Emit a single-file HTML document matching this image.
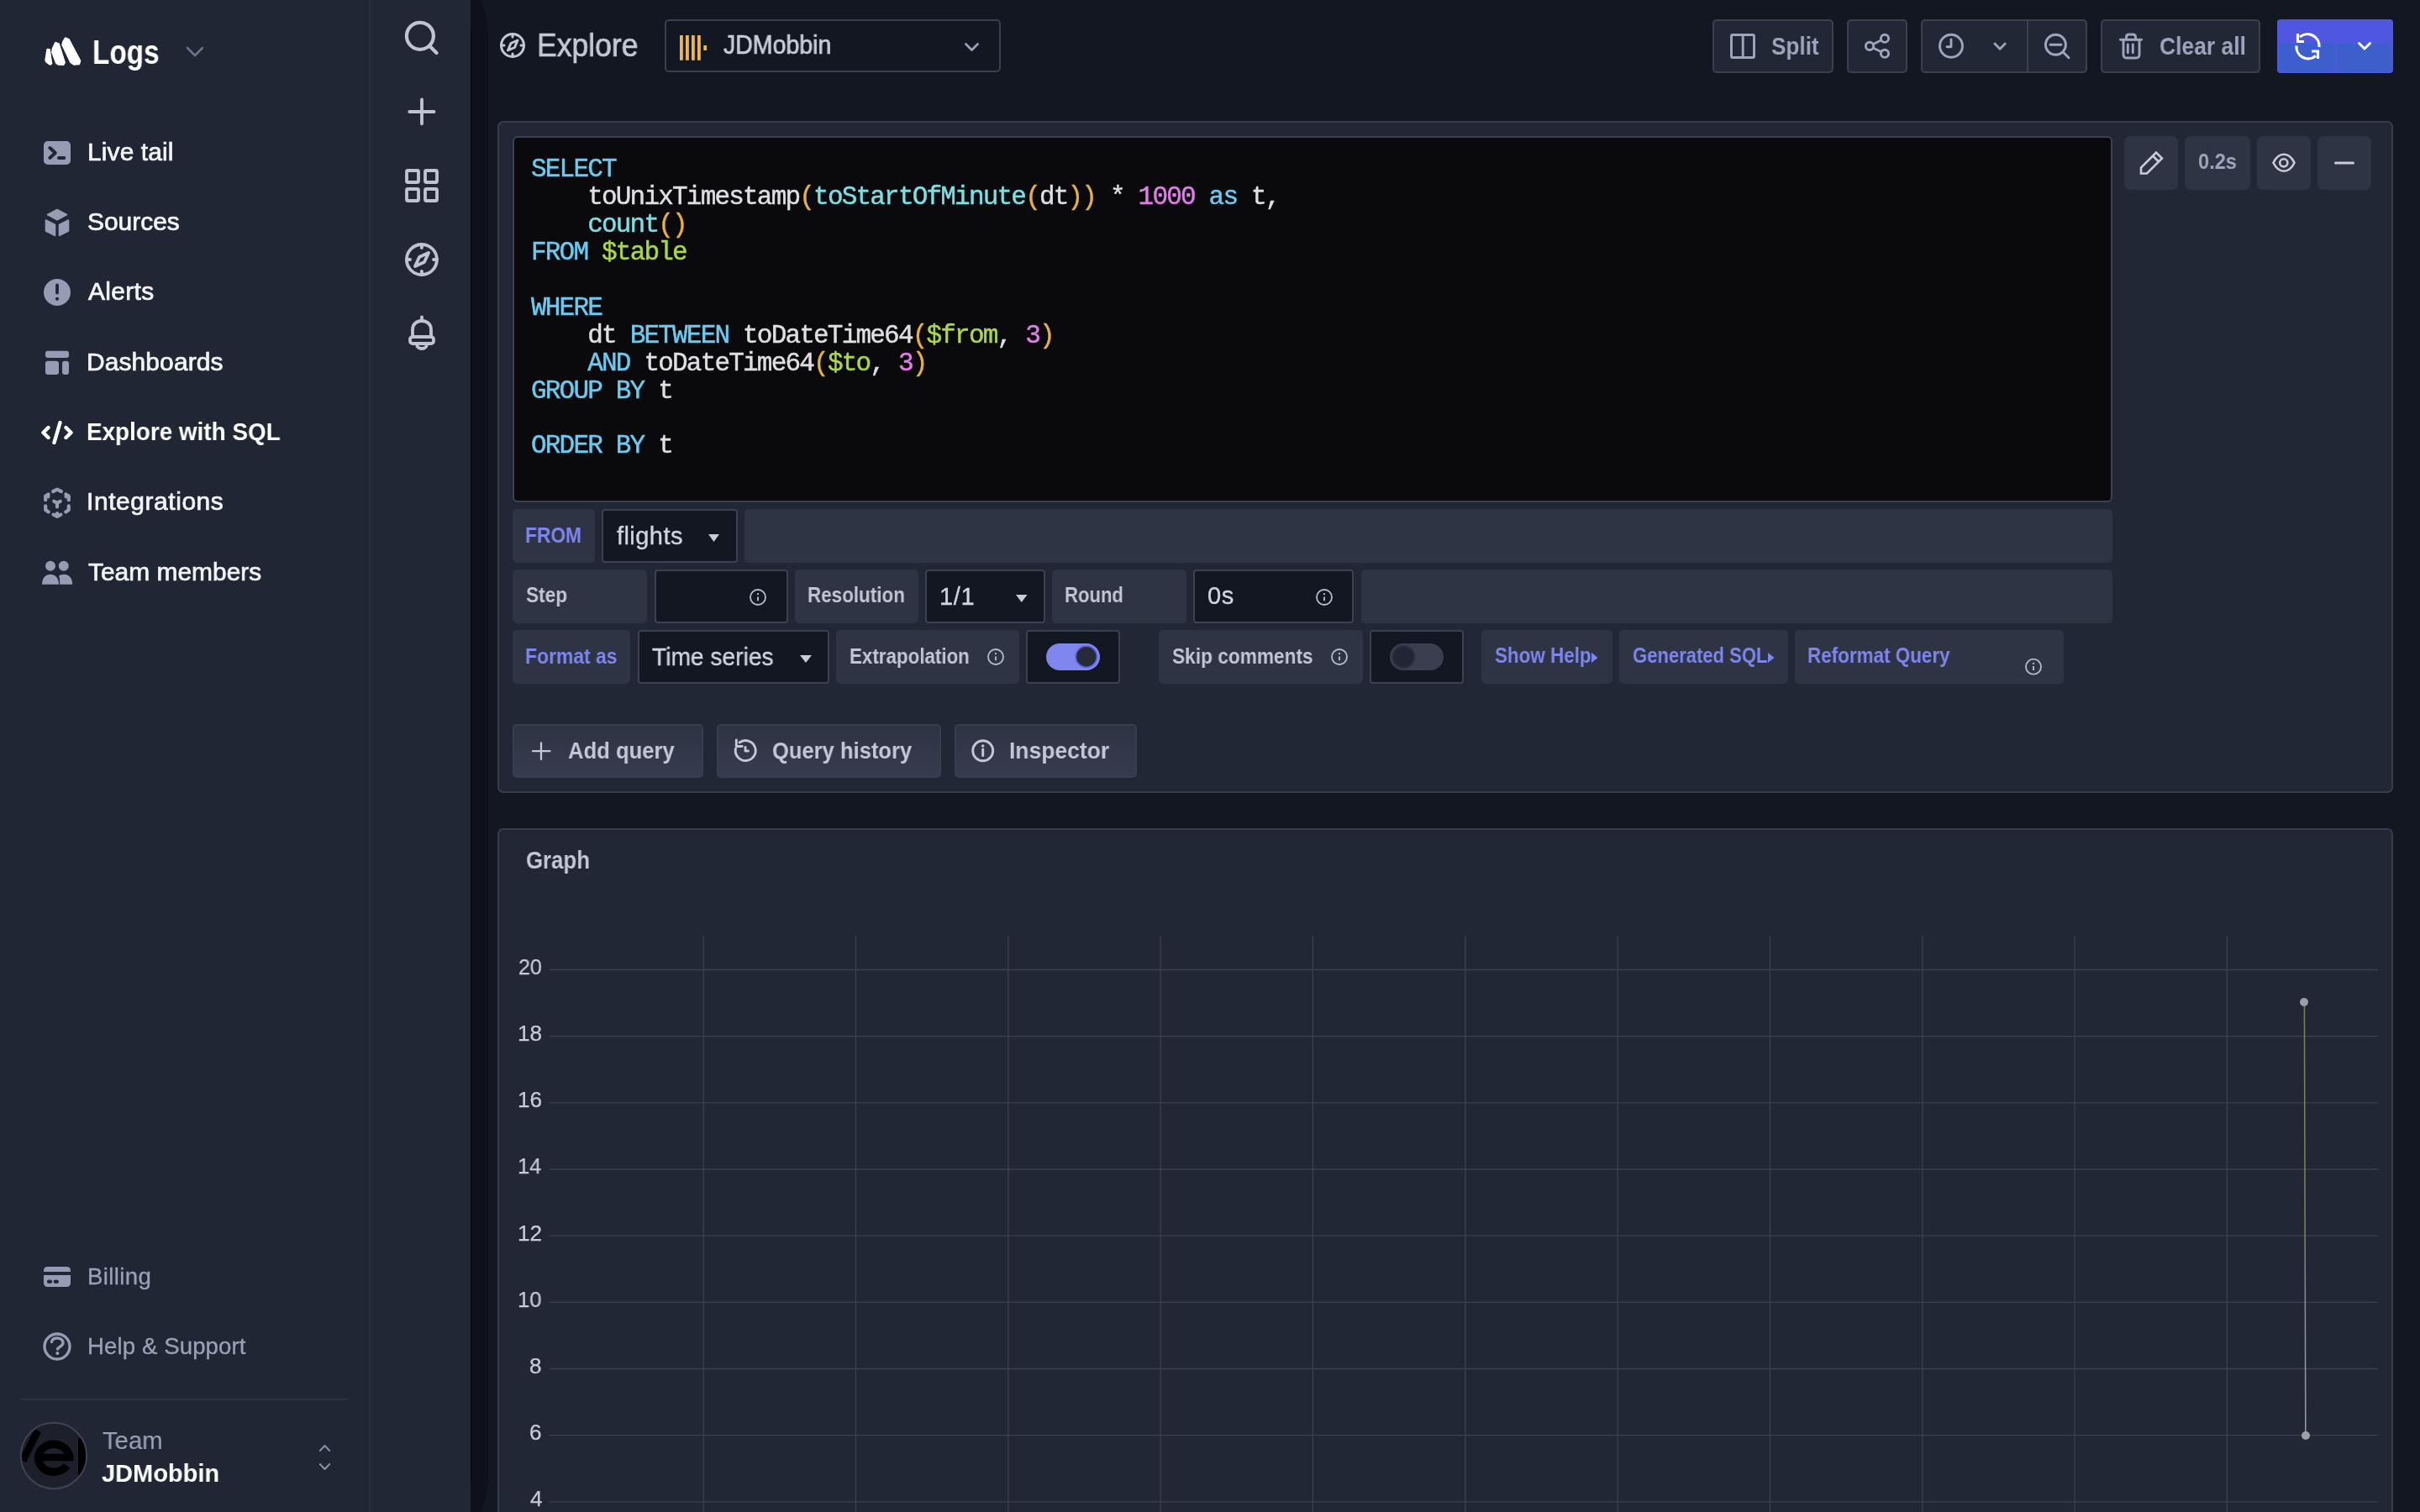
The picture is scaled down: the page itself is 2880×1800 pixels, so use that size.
<!DOCTYPE html>
<html><head><meta charset="utf-8"><title>Explore</title>
<style>
html,body{margin:0;padding:0;width:2880px;height:1800px;overflow:hidden;background:#131722;}
@media (max-width:1600px){html{zoom:0.5;}}
body{position:relative;font-family:"Liberation Sans",sans-serif;}
.r{position:absolute;display:block;}
.t{position:absolute;white-space:nowrap;will-change:transform;}
.m{position:absolute;white-space:pre;will-change:transform;font-family:"Liberation Mono",monospace;}
</style></head><body>
<div class="r" style="left:0px;top:0px;width:439px;height:1800px;background:#212635;border-radius:0px;"></div>
<div class="r" style="left:439px;top:0px;width:2px;height:1800px;background:#2a2f3e;border-radius:0px;"></div>
<div class="r" style="left:441px;top:0px;width:119px;height:1800px;background:#222736;border-radius:0px;"></div>
<svg class="r" style="left:560px;top:0px;" width="21" height="1800" viewBox="560 0 21 1800"><path d="M560,0 L571,0 C576,9 580,22 581,37 L581,1763 C580,1778 576,1791 571,1800 L560,1800 Z" fill="#0e111b"/><rect x="560" y="36" width="1.2" height="1728" fill="#07080c"/></svg>
<svg class="r" style="left:50px;top:40px;" width="50" height="42" viewBox="50 40 50 42"><g fill="#fff" stroke="#fff" stroke-width="2.6" stroke-linejoin="round"><path d="M56.6,59 L58.6,59.2 L61,75.6 L59.6,76.4 L55.4,73.4 L54.6,71.6 Z"/><path d="M66.2,51.2 L69.6,52.4 L76.6,74.4 L75.4,76.6 L69.6,76.4 L67.2,74.8 L62.4,62 L63,58 Z"/><path d="M78,45.6 L81.6,47.2 L95,72.4 L94,76 L88,76.4 L84.4,74 L74.6,53.4 L75.6,49.4 Z"/></g></svg>
<div class="t" style="left:109.75px;top:42.66px;font-size:39.97px;line-height:39.97px;color:#ffffff;font-weight:700;letter-spacing:0.000px;transform:scaleX(0.8339);transform-origin:0 0;">Logs</div>
<svg class="r" style="left:218px;top:52px;" width="28" height="20" viewBox="218 52 28 20"><path d="M223,57 L232,66 L241,57" fill="none" stroke="#6b7386" stroke-width="2.6" stroke-linecap="round" stroke-linejoin="round"/></svg>
<div class="t" style="left:103.73px;top:165.65px;font-size:29.94px;line-height:29.94px;color:#f4f5f8;font-weight:400;letter-spacing:0.124px;-webkit-text-stroke:0.7px #f4f5f8;">Live tail</div>
<div class="t" style="left:103.96px;top:248.95px;font-size:29.94px;line-height:29.94px;color:#f4f5f8;font-weight:400;letter-spacing:0.000px;transform:scaleX(0.9961);transform-origin:0 0;-webkit-text-stroke:0.7px #f4f5f8;">Sources</div>
<div class="t" style="left:105.23px;top:332.35px;font-size:29.94px;line-height:29.94px;color:#f4f5f8;font-weight:400;letter-spacing:0.324px;-webkit-text-stroke:0.7px #f4f5f8;">Alerts</div>
<div class="t" style="left:102.83px;top:415.65px;font-size:29.94px;line-height:29.94px;color:#f4f5f8;font-weight:400;letter-spacing:0.117px;-webkit-text-stroke:0.7px #f4f5f8;">Dashboards</div>
<div class="t" style="left:103.42px;top:499.82px;font-size:28.92px;line-height:28.92px;color:#ffffff;font-weight:700;letter-spacing:0.000px;transform:scaleX(0.9636);transform-origin:0 0;">Explore with SQL</div>
<div class="t" style="left:102.53px;top:582.35px;font-size:29.94px;line-height:29.94px;color:#f4f5f8;font-weight:400;letter-spacing:0.579px;-webkit-text-stroke:0.7px #f4f5f8;">Integrations</div>
<div class="t" style="left:104.63px;top:665.65px;font-size:29.94px;line-height:29.94px;color:#f4f5f8;font-weight:400;letter-spacing:0.000px;transform:scaleX(0.9996);transform-origin:0 0;-webkit-text-stroke:0.7px #f4f5f8;">Team members</div>
<svg class="r" style="left:48px;top:160px;" width="42" height="40" viewBox="48 160 42 40"><rect x="52" y="168" width="32" height="28" rx="5" fill="#959cb3"/><path d="M59.3,176 L65.8,182 L59.3,188" fill="none" stroke="#212635" stroke-width="3.9" stroke-linecap="round" stroke-linejoin="round"/><path d="M70,188 L76.3,188" stroke="#212635" stroke-width="3.9" stroke-linecap="round"/></svg>
<svg class="r" style="left:48px;top:244px;" width="42" height="42" viewBox="48 244 42 42"><g fill="#959cb3" stroke="#959cb3" stroke-width="1.6" stroke-linejoin="round"><path d="M68,249.5 L79.5,255.5 L68,261.8 L56.5,255.5 Z"/><path d="M54.5,262 L65.5,267.5 L65.5,280.5 L54.5,275 Z"/><path d="M70.5,267.5 L81.5,262 L81.5,275 L70.5,280.5 Z"/></g></svg>
<svg class="r" style="left:48px;top:328px;" width="42" height="40" viewBox="48 328 42 40"><circle cx="68" cy="348" r="16" fill="#959cb3"/><path d="M68,339.5 L68,348.5" stroke="#212635" stroke-width="3.8" stroke-linecap="round"/><circle cx="68" cy="355.8" r="2.1" fill="#212635"/></svg>
<svg class="r" style="left:48px;top:412px;" width="42" height="38" viewBox="48 412 42 38"><g fill="#959cb3"><rect x="54" y="417.7" width="28" height="8.3" rx="3"/><rect x="54" y="429.7" width="16" height="16.4" rx="3"/><rect x="74" y="429.7" width="8" height="16.4" rx="3"/></g></svg>
<svg class="r" style="left:46px;top:498px;" width="46" height="34" viewBox="46 498 46 34"><g fill="none" stroke="#fff" stroke-width="4.4" stroke-linecap="round" stroke-linejoin="round"><path d="M57.5,509 L51.5,515 L57.5,521"/><path d="M78.5,509 L84.5,515 L78.5,521"/><path d="M71.5,503 L64.5,527"/></g></svg>
<svg class="r" style="left:46px;top:576px;" width="46" height="46" viewBox="46 576 46 46"><g fill="none" stroke="#959cb3" stroke-width="4.2" stroke-linecap="round" stroke-linejoin="round"><path d="M63.2,585 L68,582.6 L72.8,585"/><path d="M54.2,595.2 L54.2,590.6 L57.6,588.4"/><path d="M81.8,595.2 L81.8,590.6 L78.4,588.4"/><path d="M54.2,602.4 L54.2,607 L57.8,609.4"/><path d="M81.8,602.4 L81.8,607 L78.2,609.4"/><path d="M63.6,612.6 L68,615 L72.4,612.6 M68,611 L68,614"/><path d="M64.3,596.8 L68,598.6 L71.7,596.8 M68,598.6 L68,603.4"/><path d="M57.5,591.2 L57.5,591.3 M78.5,591.2 L78.5,591.3"/></g></svg>
<svg class="r" style="left:46px;top:662px;" width="46" height="38" viewBox="46 662 46 38"><g fill="#959cb3"><circle cx="60" cy="673.8" r="6"/><circle cx="75.8" cy="673.8" r="6"/><path d="M71.2,695.8 L86.2,695.8 C86.2,688 82,683.8 76,683.8 C73.5,683.8 71.5,684.5 70,685.5 C71,687.5 71.2,690 71.2,695.8 Z"/><path d="M50,695.8 L70,695.8 C70,688 65.5,683.8 60,683.8 C54.5,683.8 50,688 50,695.8 Z"/></g></svg>
<div class="t" style="left:103.52px;top:1505.82px;font-size:27.62px;line-height:27.62px;color:#9aa1b6;font-weight:400;letter-spacing:0.356px;-webkit-text-stroke:0.3px #9aa1b6;">Billing</div>
<div class="t" style="left:103.52px;top:1588.62px;font-size:27.62px;line-height:27.62px;color:#9aa1b6;font-weight:400;letter-spacing:0.091px;-webkit-text-stroke:0.3px #9aa1b6;">Help &amp; Support</div>
<svg class="r" style="left:48px;top:1504px;" width="42" height="32" viewBox="48 1504 42 32"><rect x="52" y="1508" width="32" height="24" rx="4.5" fill="#959cb3"/><rect x="50" y="1514" width="36" height="4" fill="#212635"/><ellipse cx="59" cy="1525.8" rx="3.1" ry="2.2" fill="#212635"/><ellipse cx="66.8" cy="1525.8" rx="3.1" ry="2.2" fill="#212635"/></svg>
<svg class="r" style="left:46px;top:1582px;" width="44" height="42" viewBox="46 1582 44 42"><circle cx="68" cy="1603" r="15" fill="none" stroke="#959cb3" stroke-width="3.4"/><path d="M61.5,1597.5 C62,1594.5 64.5,1593 68,1593 C72,1593 75,1595.5 75,1598.8 C75,1602.5 70,1603 68.5,1606" fill="none" stroke="#959cb3" stroke-width="3.4" stroke-linecap="round"/><circle cx="68.3" cy="1611" r="2.1" fill="#959cb3"/></svg>
<div class="r" style="left:24px;top:1665px;width:390px;height:2px;background:#2c3140;border-radius:0px;"></div>
<svg class="r" style="left:20px;top:1689px;" width="88" height="88" viewBox="20 1689 88 88"><defs><clipPath id="av"><circle cx="64" cy="1733" r="39"/></clipPath></defs><circle cx="64" cy="1733" r="39" fill="#1d202b"/><g clip-path="url(#av)"><path d="M27,1739 L45,1703" stroke="#000" stroke-width="9"/><rect x="93" y="1712" width="9" height="44" fill="#000"/><path d="M82.5,1735 A18.5,16.5 0 1 0 79.5,1744.8" fill="none" stroke="#000" stroke-width="9.5"/><path d="M46,1735 L87.5,1735" stroke="#000" stroke-width="8.5"/></g><circle cx="64" cy="1733" r="39.2" fill="none" stroke="#3e4354" stroke-width="2"/></svg>
<div class="t" style="left:121.64px;top:1699.61px;font-size:30.23px;line-height:30.23px;color:#9aa1b6;font-weight:400;letter-spacing:0.000px;transform:scaleX(0.9681);transform-origin:0 0;-webkit-text-stroke:0.15px #9aa1b6;">Team</div>
<div class="t" style="left:120.56px;top:1738.78px;font-size:29.80px;line-height:29.80px;color:#ffffff;font-weight:700;letter-spacing:0.000px;transform:scaleX(0.9735);transform-origin:0 0;">JDMobbin</div>
<svg class="r" style="left:374px;top:1714px;" width="26" height="42" viewBox="374 1714 26 42"><g fill="none" stroke="#8a91a6" stroke-width="2" stroke-linecap="round" stroke-linejoin="round"><path d="M380.8,1727 L386.5,1721 L392.2,1727"/><path d="M380.8,1743 L386.5,1749 L392.2,1743"/></g></svg>
<svg class="r" style="left:476px;top:20px;" width="52" height="50" viewBox="476 20 52 50"><g fill="none" stroke="#c0c4d2" stroke-width="4.2" stroke-linecap="round"><circle cx="499.9" cy="42.8" r="16"/><path d="M512,55.5 L519.5,63"/></g></svg>
<svg class="r" style="left:480px;top:112px;" width="44" height="42" viewBox="480 112 44 42"><g fill="none" stroke="#c0c4d2" stroke-width="3.8" stroke-linecap="round"><path d="M502,118.5 L502,147.3 M487.3,133 L516.5,133"/></g></svg>
<svg class="r" style="left:478px;top:196px;" width="48" height="50" viewBox="478 196 48 50"><g fill="none" stroke="#c0c4d2" stroke-width="3.8"><rect x="484" y="203" width="14" height="14" rx="1.5"/><rect x="506" y="203" width="14" height="14" rx="1.5"/><rect x="484" y="225" width="14" height="14" rx="1.5"/><rect x="506" y="225" width="14" height="14" rx="1.5"/></g></svg>
<svg class="r" style="left:476px;top:284px;" width="52" height="50" viewBox="476 284 52 50"><g fill="none" stroke="#c0c4d2" stroke-width="3.8" stroke-linecap="round" stroke-linejoin="round"><circle cx="501.9" cy="309" r="18"/><path d="M501.9,291 L501.9,295 M501.9,323 L501.9,327 M484,309 L488,309 M516,309 L520,309"/><path d="M510,301 L505,312 L494,317 L499,306 Z"/></g></svg>
<svg class="r" style="left:480px;top:372px;" width="44" height="50" viewBox="480 372 44 50"><g fill="none" stroke="#c0c4d2" stroke-width="3.8" stroke-linecap="round" stroke-linejoin="round"><path d="M502,377.5 L502,382"/><path d="M491,401 L491,392 C491,386 496,382 502,382 C508,382 513,386 513,392 L513,401"/><rect x="488" y="401" width="28" height="8" rx="3"/><path d="M496,409.5 C496,413 498.5,415 502,415 C505.5,415 508,413 508,409.5"/></g></svg>
<svg class="r" style="left:590px;top:34px;" width="40" height="40" viewBox="590 34 40 40"><g fill="none" stroke="#c3c7d4" stroke-width="3" stroke-linecap="round" stroke-linejoin="round"><circle cx="610" cy="54" r="13.5"/><path d="M610,40.5 L610,44 M610,64 L610,67.5 M596.5,54 L600,54 M620,54 L623.5,54"/><path d="M616,48 L612.5,56.5 L604.5,60 L608,51.5 Z"/></g></svg>
<div class="t" style="left:639.07px;top:34.18px;font-size:39.24px;line-height:39.24px;color:#c5c9d6;font-weight:400;letter-spacing:0.000px;transform:scaleX(0.9053);transform-origin:0 0;-webkit-text-stroke:0.7px #c5c9d6;">Explore</div>
<div class="r" style="left:791px;top:23px;width:400px;height:63px;background:#131722;border-radius:5px;border:2px solid #3a3f4e;;box-sizing:border-box"></div>
<svg class="r" style="left:805px;top:38px;" width="40" height="38" viewBox="805 38 40 38"><g fill="#eeb64e"><rect x="809" y="42" width="3.8" height="29.8"/><rect x="816" y="42" width="3.8" height="29.8"/><rect x="823" y="42" width="3.8" height="29.8"/><rect x="830" y="42" width="3.8" height="29.8"/><rect x="837.3" y="54" width="3.8" height="6"/></g></svg>
<div class="t" style="left:860.57px;top:38.16px;font-size:30.52px;line-height:30.52px;color:#c8ccd8;font-weight:400;letter-spacing:0.000px;transform:scaleX(0.9334);transform-origin:0 0;-webkit-text-stroke:0.7px #c8ccd8;">JDMobbin</div>
<svg class="r" style="left:1144px;top:46px;" width="26" height="20" viewBox="1144 46 26 20"><path d="M1149.5,52.5 L1156.5,59.5 L1163.5,52.5" fill="none" stroke="#9aa1b4" stroke-width="2.8" stroke-linecap="round" stroke-linejoin="round"/></svg>
<div class="r" style="left:2038px;top:23px;width:144px;height:64px;background:#222736;border-radius:5px;border:2px solid #3b4050;;box-sizing:border-box"></div>
<div class="r" style="left:2198px;top:23px;width:72px;height:64px;background:#222736;border-radius:5px;border:2px solid #3b4050;;box-sizing:border-box"></div>
<div class="r" style="left:2286px;top:23px;width:198px;height:64px;background:#222736;border-radius:5px;border:2px solid #3b4050;;box-sizing:border-box"></div>
<div class="r" style="left:2500px;top:23px;width:190px;height:64px;background:#222736;border-radius:5px;border:2px solid #3b4050;;box-sizing:border-box"></div>
<div class="r" style="left:2412px;top:25px;width:2px;height:60px;background:#3b4050;border-radius:0px;"></div>
<svg class="r" style="left:2055px;top:36px;" width="38" height="38" viewBox="2055 36 38 38"><g fill="none" stroke="#9ea5bc" stroke-width="2.9"><rect x="2060.5" y="41.5" width="27" height="27" rx="1.5"/><path d="M2074.2,41.5 L2074.2,68.5"/></g></svg>
<div class="t" style="left:2107.72px;top:39.55px;font-size:29.36px;line-height:29.36px;color:#9ea5bc;font-weight:700;letter-spacing:0.000px;transform:scaleX(0.8906);transform-origin:0 0;">Split</div>
<svg class="r" style="left:2215px;top:36px;" width="40" height="38" viewBox="2215 36 40 38"><g fill="none" stroke="#9ea5bc" stroke-width="2.9"><circle cx="2243" cy="45.8" r="4.6"/><circle cx="2225" cy="54.9" r="4.6"/><circle cx="2243" cy="63.8" r="4.6"/><path d="M2229,52.8 L2239,47.8 M2229,57 L2239,61.8"/></g></svg>
<svg class="r" style="left:2302px;top:36px;" width="40" height="38" viewBox="2302 36 40 38"><g fill="none" stroke="#9ea5bc" stroke-width="2.9" stroke-linecap="round" stroke-linejoin="round"><circle cx="2322" cy="54.8" r="13.5"/><path d="M2322,47 L2322,55.7 L2317,55.7"/></g></svg>
<svg class="r" style="left:2368px;top:46px;" width="24" height="18" viewBox="2368 46 24 18"><path d="M2374,52 L2380.1,58.2 L2386.2,52" fill="none" stroke="#9ea5bc" stroke-width="2.8" stroke-linecap="round" stroke-linejoin="round"/></svg>
<svg class="r" style="left:2428px;top:36px;" width="40" height="38" viewBox="2428 36 40 38"><g fill="none" stroke="#9ea5bc" stroke-width="2.9" stroke-linecap="round"><circle cx="2446.4" cy="53.2" r="12"/><path d="M2440,53.2 L2453,53.2 M2455.5,62.3 L2462,68.8"/></g></svg>
<svg class="r" style="left:2518px;top:36px;" width="36" height="38" viewBox="2518 36 36 38"><g fill="none" stroke="#9ea5bc" stroke-width="2.9" stroke-linecap="round" stroke-linejoin="round"><path d="M2523.5,47.3 L2548.5,47.3"/><path d="M2530.5,47 L2530.5,44 C2530.5,42 2532,41 2534,41 L2538,41 C2540,41 2541.5,42 2541.5,44 L2541.5,47"/><path d="M2527,47.5 L2527,65 C2527,67.5 2528.5,69 2531,69 L2542,69 C2544.5,69 2546,67.5 2546,65 L2546,47.5"/><path d="M2532.3,53 L2532.3,62.8 M2538.3,53 L2538.3,62.8"/></g></svg>
<div class="t" style="left:2569.94px;top:39.55px;font-size:29.36px;line-height:29.36px;color:#9ea5bc;font-weight:700;letter-spacing:0.000px;transform:scaleX(0.9010);transform-origin:0 0;">Clear all</div>
<div class="r" style="left:2710px;top:23px;width:138px;height:64px;background:#4f57e0;border-radius:4px;"></div>
<div class="r" style="left:2712px;top:52px;width:67px;height:33px;background:#3d5fcb;border-radius:0px;"></div>
<div class="r" style="left:2782px;top:52px;width:64px;height:33px;background:#3d5fcb;border-radius:0px;"></div>
<div class="r" style="left:2779px;top:25px;width:3px;height:60px;background:#4f57e0;border-radius:0px;"></div>
<svg class="r" style="left:2725px;top:34px;" width="42" height="42" viewBox="2725 34 42 42"><g fill="none" stroke="#fff" stroke-width="3.2" stroke-linecap="butt" stroke-linejoin="miter"><path d="M2760,56 A14,14 0 0 0 2737,44"/><path d="M2733,54.5 A14,14 0 0 0 2756,66.5"/><path d="M2734.5,40 L2734.5,49.5 L2742,49.5"/><path d="M2758.5,70 L2758.5,61 L2751,61"/></g></svg>
<svg class="r" style="left:2802px;top:44px;" width="24" height="22" viewBox="2802 44 24 22"><path d="M2807.5,51.5 L2814,58 L2820.5,51.5" fill="none" stroke="#fff" stroke-width="3" stroke-linecap="round" stroke-linejoin="round"/></svg>
<div class="r" style="left:592px;top:144px;width:2256px;height:800px;background:#222736;border-radius:7px;border:2px solid #373c4e;;box-sizing:border-box"></div>
<div class="r" style="left:610px;top:162px;width:1904px;height:436px;background:#0a0a0d;border-radius:6px;border:2px solid #3b4052;;box-sizing:border-box"></div>
<div class="m" style="left:632px;top:185.84px;font-size:31.0px;line-height:31.0px;letter-spacing:-1.80px;-webkit-text-stroke:0.45px currentColor"><span style="color:#6dc9f0">SELECT</span></div>
<div class="m" style="left:632px;top:218.80px;font-size:31.0px;line-height:31.0px;letter-spacing:-1.80px;-webkit-text-stroke:0.45px currentColor"><span style="color:#dedee4">&nbsp;&nbsp;&nbsp;&nbsp;toUnixTimestamp</span><span style="color:#e6b044">(</span><span style="color:#7ddfe2">toStartOfMinute</span><span style="color:#e6b044">(</span><span style="color:#dedee4">dt</span><span style="color:#e6b044">))</span><span style="color:#dedee4">&nbsp;*&nbsp;</span><span style="color:#e07ee6">1000</span><span style="color:#dedee4">&nbsp;</span><span style="color:#6dc9f0">as</span><span style="color:#dedee4">&nbsp;t,</span></div>
<div class="m" style="left:632px;top:251.76px;font-size:31.0px;line-height:31.0px;letter-spacing:-1.80px;-webkit-text-stroke:0.45px currentColor"><span style="color:#7ddfe2">&nbsp;&nbsp;&nbsp;&nbsp;count</span><span style="color:#e6b044">()</span></div>
<div class="m" style="left:632px;top:284.72px;font-size:31.0px;line-height:31.0px;letter-spacing:-1.80px;-webkit-text-stroke:0.45px currentColor"><span style="color:#6dc9f0">FROM</span><span style="color:#dedee4">&nbsp;</span><span style="color:#aad74b">$table</span></div>
<div class="m" style="left:632px;top:350.64px;font-size:31.0px;line-height:31.0px;letter-spacing:-1.80px;-webkit-text-stroke:0.45px currentColor"><span style="color:#6dc9f0">WHERE</span></div>
<div class="m" style="left:632px;top:383.60px;font-size:31.0px;line-height:31.0px;letter-spacing:-1.80px;-webkit-text-stroke:0.45px currentColor"><span style="color:#dedee4">&nbsp;&nbsp;&nbsp;&nbsp;dt&nbsp;</span><span style="color:#6dc9f0">BETWEEN</span><span style="color:#dedee4">&nbsp;toDateTime64</span><span style="color:#e6b044">(</span><span style="color:#aad74b">$from</span><span style="color:#dedee4">,&nbsp;</span><span style="color:#e07ee6">3</span><span style="color:#e6b044">)</span></div>
<div class="m" style="left:632px;top:416.56px;font-size:31.0px;line-height:31.0px;letter-spacing:-1.80px;-webkit-text-stroke:0.45px currentColor"><span style="color:#6dc9f0">&nbsp;&nbsp;&nbsp;&nbsp;AND</span><span style="color:#dedee4">&nbsp;toDateTime64</span><span style="color:#e6b044">(</span><span style="color:#aad74b">$to</span><span style="color:#dedee4">,&nbsp;</span><span style="color:#e07ee6">3</span><span style="color:#e6b044">)</span></div>
<div class="m" style="left:632px;top:449.52px;font-size:31.0px;line-height:31.0px;letter-spacing:-1.80px;-webkit-text-stroke:0.45px currentColor"><span style="color:#6dc9f0">GROUP&nbsp;BY</span><span style="color:#dedee4">&nbsp;t</span></div>
<div class="m" style="left:632px;top:515.44px;font-size:31.0px;line-height:31.0px;letter-spacing:-1.80px;-webkit-text-stroke:0.45px currentColor"><span style="color:#6dc9f0">ORDER&nbsp;BY</span><span style="color:#dedee4">&nbsp;t</span></div>
<div class="r" style="left:610px;top:606px;width:98px;height:64px;background:#2f3445;border-radius:5px;"></div>
<div class="t" style="left:625.46px;top:624.59px;font-size:25.29px;line-height:25.29px;color:#7d85ef;font-weight:700;letter-spacing:0.000px;transform:scaleX(0.9006);transform-origin:0 0;">FROM</div>
<div class="r" style="left:716px;top:606px;width:162px;height:64px;background:#131722;border-radius:4px;border:2px solid #3b4052;;box-sizing:border-box"></div>
<div class="t" style="left:733.56px;top:624.09px;font-size:29.07px;line-height:29.07px;color:#d0d4e0;font-weight:400;letter-spacing:0.418px;-webkit-text-stroke:0.35px #d0d4e0;">flights</div>
<svg class="r" style="left:841px;top:634px;" width="17" height="13" viewBox="841 634 17 13"><path d="M843,636 L856,636 L849.5,645 Z" fill="#c8ccd8"/></svg>
<div class="r" style="left:886px;top:606px;width:1628px;height:64px;background:#2f3445;border-radius:5px;"></div>
<div class="r" style="left:610px;top:678px;width:160px;height:64px;background:#2f3445;border-radius:5px;"></div>
<div class="t" style="left:626.32px;top:696.19px;font-size:25.29px;line-height:25.29px;color:#c2c6d3;font-weight:700;letter-spacing:0.000px;transform:scaleX(0.8965);transform-origin:0 0;">Step</div>
<div class="r" style="left:779px;top:678px;width:159px;height:64px;background:#131722;border-radius:4px;border:2px solid #3b4052;;box-sizing:border-box"></div>
<svg class="r" style="left:890px;top:699px;" width="25" height="25" viewBox="890 699 25 25"><circle cx="902" cy="711" r="9.0" fill="none" stroke="#b6bbce" stroke-width="1.8"/><circle cx="902" cy="707.2" r="1.15" fill="#b6bbce"/><path d="M902,710.4 L902,715.2" stroke="#b6bbce" stroke-width="1.9" stroke-linecap="butt"/></svg>
<div class="r" style="left:946px;top:678px;width:147px;height:64px;background:#2f3445;border-radius:5px;"></div>
<div class="t" style="left:961.19px;top:696.39px;font-size:25.29px;line-height:25.29px;color:#c2c6d3;font-weight:700;letter-spacing:0.000px;transform:scaleX(0.8870);transform-origin:0 0;">Resolution</div>
<div class="r" style="left:1101px;top:678px;width:143px;height:64px;background:#131722;border-radius:4px;border:2px solid #3b4052;;box-sizing:border-box"></div>
<div class="t" style="left:1118.32px;top:695.99px;font-size:29.07px;line-height:29.07px;color:#d0d4e0;font-weight:400;letter-spacing:0.577px;-webkit-text-stroke:0.35px #d0d4e0;">1/1</div>
<svg class="r" style="left:1206.5px;top:706px;" width="17.5" height="13" viewBox="1206.5 706 17.5 13"><path d="M1208.5,708 L1222,708 L1215.25,717 Z" fill="#c8ccd8"/></svg>
<div class="r" style="left:1252px;top:678px;width:160px;height:64px;background:#2f3445;border-radius:5px;"></div>
<div class="t" style="left:1266.51px;top:696.39px;font-size:25.29px;line-height:25.29px;color:#c2c6d3;font-weight:700;letter-spacing:0.000px;transform:scaleX(0.8736);transform-origin:0 0;">Round</div>
<div class="r" style="left:1420px;top:678px;width:191px;height:64px;background:#131722;border-radius:4px;border:2px solid #3b4052;;box-sizing:border-box"></div>
<div class="t" style="left:1436.84px;top:694.69px;font-size:29.07px;line-height:29.07px;color:#d0d4e0;font-weight:400;letter-spacing:0.512px;-webkit-text-stroke:0.35px #d0d4e0;">0s</div>
<svg class="r" style="left:1564px;top:699px;" width="25" height="25" viewBox="1564 699 25 25"><circle cx="1576" cy="711" r="9.0" fill="none" stroke="#b6bbce" stroke-width="1.8"/><circle cx="1576" cy="707.2" r="1.15" fill="#b6bbce"/><path d="M1576,710.4 L1576,715.2" stroke="#b6bbce" stroke-width="1.9" stroke-linecap="butt"/></svg>
<div class="r" style="left:1620px;top:678px;width:894px;height:64px;background:#2f3445;border-radius:5px;"></div>
<div class="r" style="left:610px;top:750px;width:140px;height:64px;background:#2f3445;border-radius:5px;"></div>
<div class="t" style="left:625.45px;top:768.99px;font-size:25.29px;line-height:25.29px;color:#7d85ef;font-weight:700;letter-spacing:0.000px;transform:scaleX(0.9060);transform-origin:0 0;">Format as</div>
<div class="r" style="left:759px;top:750px;width:228px;height:64px;background:#131722;border-radius:4px;border:2px solid #3b4052;;box-sizing:border-box"></div>
<div class="t" style="left:776.37px;top:767.89px;font-size:29.07px;line-height:29.07px;color:#d0d4e0;font-weight:400;letter-spacing:0.000px;transform:scaleX(0.9698);transform-origin:0 0;-webkit-text-stroke:0.35px #d0d4e0;">Time series</div>
<svg class="r" style="left:950px;top:778px;" width="18" height="13" viewBox="950 778 18 13"><path d="M952,780 L966,780 L959.0,789 Z" fill="#c8ccd8"/></svg>
<div class="r" style="left:995px;top:750px;width:218px;height:64px;background:#2f3445;border-radius:5px;"></div>
<div class="t" style="left:1010.99px;top:768.99px;font-size:25.29px;line-height:25.29px;color:#c2c6d3;font-weight:700;letter-spacing:0.000px;transform:scaleX(0.8839);transform-origin:0 0;">Extrapolation</div>
<svg class="r" style="left:1173px;top:770px;" width="25" height="25" viewBox="1173 770 25 25"><circle cx="1185" cy="782" r="9.0" fill="none" stroke="#b6bbce" stroke-width="1.8"/><circle cx="1185" cy="778.2" r="1.15" fill="#b6bbce"/><path d="M1185,781.4 L1185,786.2" stroke="#b6bbce" stroke-width="1.9" stroke-linecap="butt"/></svg>
<div class="r" style="left:1221px;top:750px;width:112px;height:64px;background:#131722;border-radius:4px;border:2px solid #3b4052;;box-sizing:border-box"></div>
<div class="r" style="left:1245px;top:766px;width:64px;height:32px;background:#7f86ee;border-radius:16px;"></div>
<svg class="r" style="left:1276px;top:764px;" width="36" height="36" viewBox="1276 764 36 36"><circle cx="1292.8" cy="781.8" r="12.6" fill="#262b38" stroke="#5a63e0" stroke-width="1.8"/></svg>
<div class="r" style="left:1379px;top:750px;width:243px;height:64px;background:#2f3445;border-radius:5px;"></div>
<div class="t" style="left:1395.12px;top:768.59px;font-size:25.29px;line-height:25.29px;color:#c2c6d3;font-weight:700;letter-spacing:0.000px;transform:scaleX(0.8967);transform-origin:0 0;">Skip comments</div>
<svg class="r" style="left:1582px;top:770px;" width="25" height="25" viewBox="1582 770 25 25"><circle cx="1594" cy="782" r="9.0" fill="none" stroke="#b6bbce" stroke-width="1.8"/><circle cx="1594" cy="778.2" r="1.15" fill="#b6bbce"/><path d="M1594,781.4 L1594,786.2" stroke="#b6bbce" stroke-width="1.9" stroke-linecap="butt"/></svg>
<div class="r" style="left:1630px;top:750px;width:112px;height:64px;background:#131722;border-radius:4px;border:2px solid #3b4052;;box-sizing:border-box"></div>
<div class="r" style="left:1654px;top:766px;width:64px;height:32px;background:#3a3f50;border-radius:16px;"></div>
<svg class="r" style="left:1652px;top:764px;" width="36" height="36" viewBox="1652 764 36 36"><circle cx="1670.3" cy="782" r="13" fill="#222633" stroke="#2c3142" stroke-width="2"/></svg>
<div class="r" style="left:1763px;top:750px;width:156px;height:64px;background:#2f3445;border-radius:5px;"></div>
<div class="t" style="left:1779.03px;top:768.19px;font-size:25.29px;line-height:25.29px;color:#7d85ef;font-weight:700;letter-spacing:0.000px;transform:scaleX(0.8865);transform-origin:0 0;">Show Help</div>
<svg class="r" style="left:1892px;top:775px;" width="11.5" height="16" viewBox="1892 775 11.5 16"><path d="M1894,777 L1901.5,783.0 L1894,789 Z" fill="#7d85ef"/></svg>
<div class="r" style="left:1927px;top:750px;width:201px;height:64px;background:#2f3445;border-radius:5px;"></div>
<div class="t" style="left:1942.52px;top:768.19px;font-size:25.29px;line-height:25.29px;color:#7d85ef;font-weight:700;letter-spacing:0.000px;transform:scaleX(0.8720);transform-origin:0 0;">Generated SQL</div>
<svg class="r" style="left:2101.5px;top:775px;" width="11.5" height="16" viewBox="2101.5 775 11.5 16"><path d="M2103.5,777 L2111,783.0 L2103.5,789 Z" fill="#7d85ef"/></svg>
<div class="r" style="left:2136px;top:750px;width:320px;height:64px;background:#2f3445;border-radius:5px;"></div>
<div class="t" style="left:2151.48px;top:768.19px;font-size:25.29px;line-height:25.29px;color:#7d85ef;font-weight:700;letter-spacing:0.000px;transform:scaleX(0.8875);transform-origin:0 0;">Reformat Query</div>
<svg class="r" style="left:2408px;top:781px;" width="25" height="25" viewBox="2408 781 25 25"><circle cx="2420" cy="793.7" r="9.0" fill="none" stroke="#b6bbce" stroke-width="1.8"/><circle cx="2420" cy="789.9000000000001" r="1.15" fill="#b6bbce"/><path d="M2420,793.1 L2420,797.9000000000001" stroke="#b6bbce" stroke-width="1.9" stroke-linecap="butt"/></svg>
<div class="r" style="left:2528px;top:162px;width:64px;height:64px;background:#2f3445;border-radius:7px;"></div>
<div class="r" style="left:2600px;top:162px;width:78px;height:64px;background:#2f3445;border-radius:7px;"></div>
<div class="r" style="left:2686px;top:162px;width:64px;height:64px;background:#2f3445;border-radius:7px;"></div>
<div class="r" style="left:2758px;top:162px;width:64px;height:64px;background:#2f3445;border-radius:7px;"></div>
<svg class="r" style="left:2542px;top:176px;" width="38" height="36" viewBox="2542 176 38 36"><g fill="none" stroke="#c8ccd8" stroke-width="2.6" stroke-linejoin="miter"><path d="M2548,206.5 L2548,199.5 L2566,181.5 L2573,188.5 L2555,206.5 Z"/><path d="M2562,185.5 L2569,192.5"/></g></svg>
<div class="t" style="left:2615.96px;top:180.37px;font-size:25.44px;line-height:25.44px;color:#9ea5bc;font-weight:700;letter-spacing:0.000px;transform:scaleX(0.9275);transform-origin:0 0;">0.2s</div>
<svg class="r" style="left:2700px;top:180px;" width="36" height="28" viewBox="2700 180 36 28"><g fill="none" stroke="#c8ccd8" stroke-width="2.6"><path d="M2705.5,193.8 C2709,186.5 2713,183.8 2718,183.8 C2723,183.8 2727,186.5 2730.5,193.8 C2727,201 2723,203.8 2718,203.8 C2713,203.8 2709,201 2705.5,193.8 Z"/><circle cx="2717.8" cy="193.8" r="4.6"/></g></svg>
<svg class="r" style="left:2774px;top:188px;" width="32" height="12" viewBox="2774 188 32 12"><path d="M2779.5,194 L2800.5,194" stroke="#c8ccd8" stroke-width="3" stroke-linecap="round"/></svg>
<div class="r" style="left:610px;top:862px;width:227px;height:64px;background:linear-gradient(#2e3343,#363b4f);border-radius:5px;border:2px solid #383d4f;;box-sizing:border-box"></div>
<div class="r" style="left:853px;top:862px;width:267px;height:64px;background:linear-gradient(#2e3343,#363b4f);border-radius:5px;border:2px solid #383d4f;;box-sizing:border-box"></div>
<div class="r" style="left:1136px;top:862px;width:217px;height:64px;background:linear-gradient(#2e3343,#363b4f);border-radius:5px;border:2px solid #383d4f;;box-sizing:border-box"></div>
<svg class="r" style="left:628px;top:878px;" width="32" height="32" viewBox="628 878 32 32"><path d="M644,884.5 L644,904 M634,894.2 L654.5,894.2" stroke="#c4c8d6" stroke-width="2.3" stroke-linecap="round"/></svg>
<div class="t" style="left:675.86px;top:878.71px;font-size:28.34px;line-height:28.34px;color:#c4c8d6;font-weight:700;letter-spacing:0.000px;transform:scaleX(0.9045);transform-origin:0 0;">Add query</div>
<svg class="r" style="left:870px;top:876px;" width="34" height="36" viewBox="870 876 34 36"><g fill="none" stroke="#c4c8d6" stroke-width="2.9" stroke-linecap="round" stroke-linejoin="round"><path d="M875.5,891 A12,12 0 1 0 880,884"/><path d="M876.3,881 L876.3,888.5 L883.2,888.5"/><path d="M887,889.5 L887,894 L890.5,894"/></g></svg>
<div class="t" style="left:919.38px;top:878.71px;font-size:28.34px;line-height:28.34px;color:#c4c8d6;font-weight:700;letter-spacing:0.000px;transform:scaleX(0.9019);transform-origin:0 0;">Query history</div>
<svg class="r" style="left:1152px;top:878px;" width="36" height="32" viewBox="1152 878 36 32"><circle cx="1169.7" cy="893.8" r="12" fill="none" stroke="#c4c8d6" stroke-width="2.9"/><circle cx="1169.7" cy="888" r="1.8" fill="#c4c8d6"/><path d="M1169.7,892 L1169.7,899.5" stroke="#c4c8d6" stroke-width="3" stroke-linecap="round"/></svg>
<div class="t" style="left:1201.01px;top:878.71px;font-size:28.34px;line-height:28.34px;color:#c4c8d6;font-weight:700;letter-spacing:0.000px;transform:scaleX(0.9339);transform-origin:0 0;">Inspector</div>
<div class="r" style="left:592px;top:986px;width:2256px;height:854px;background:#222736;border-radius:7px;border:2px solid #373c4e;;box-sizing:border-box"></div>
<div class="t" style="left:625.57px;top:1009.94px;font-size:28.78px;line-height:28.78px;color:#c4c8d6;font-weight:700;letter-spacing:0.000px;transform:scaleX(0.8965);transform-origin:0 0;">Graph</div>
<svg class="r" style="left:593px;top:1100px;" width="2255" height="700" viewBox="593 1100 2255 700"><defs><linearGradient id="lg" x1="0" y1="0" x2="0" y2="1"><stop offset="0" stop-color="#76834f"/><stop offset="0.55" stop-color="#7c8858"/><stop offset="0.75" stop-color="#8e949a"/><stop offset="1" stop-color="#9aa0a8"/></linearGradient></defs><g stroke="#3b4050" stroke-width="1.3" fill="none"><path d="M654,1154.50 L2830,1154.50"/><path d="M654,1233.67 L2830,1233.67"/><path d="M654,1312.84 L2830,1312.84"/><path d="M654,1392.01 L2830,1392.01"/><path d="M654,1471.18 L2830,1471.18"/><path d="M654,1550.35 L2830,1550.35"/><path d="M654,1629.52 L2830,1629.52"/><path d="M654,1708.69 L2830,1708.69"/><path d="M654,1787.86 L2830,1787.86"/><path d="M837.20,1114 L837.20,1800"/><path d="M1018.52,1114 L1018.52,1800"/><path d="M1199.84,1114 L1199.84,1800"/><path d="M1381.16,1114 L1381.16,1800"/><path d="M1562.48,1114 L1562.48,1800"/><path d="M1743.80,1114 L1743.80,1800"/><path d="M1925.12,1114 L1925.12,1800"/><path d="M2106.44,1114 L2106.44,1800"/><path d="M2287.76,1114 L2287.76,1800"/><path d="M2469.08,1114 L2469.08,1800"/><path d="M2650.40,1114 L2650.40,1800"/></g><path d="M2742.4,1193 L2743.8,1709" stroke="url(#lg)" stroke-width="1.5"/><circle cx="2742" cy="1193" r="5" fill="#9ba0a8"/><circle cx="2744" cy="1709" r="5" fill="#9ba0a8"/></svg>
<div class="t" style="left:616.55px;top:1137.85px;font-size:26.16px;line-height:26.16px;color:#c8ccd8;font-weight:400;letter-spacing:0.000px;transform:scaleX(0.9570);transform-origin:0 0;-webkit-text-stroke:0.25px #c8ccd8;">20</div>
<div class="t" style="left:615.87px;top:1217.02px;font-size:26.16px;line-height:26.16px;color:#c8ccd8;font-weight:400;letter-spacing:0.000px;transform:scaleX(0.9859);transform-origin:0 0;-webkit-text-stroke:0.25px #c8ccd8;">18</div>
<div class="t" style="left:615.87px;top:1296.19px;font-size:26.16px;line-height:26.16px;color:#c8ccd8;font-weight:400;letter-spacing:0.000px;transform:scaleX(0.9859);transform-origin:0 0;-webkit-text-stroke:0.25px #c8ccd8;">16</div>
<div class="t" style="left:615.89px;top:1375.36px;font-size:26.16px;line-height:26.16px;color:#c8ccd8;font-weight:400;letter-spacing:0.000px;transform:scaleX(0.9712);transform-origin:0 0;-webkit-text-stroke:0.25px #c8ccd8;">14</div>
<div class="t" style="left:615.85px;top:1454.53px;font-size:26.16px;line-height:26.16px;color:#c8ccd8;font-weight:400;letter-spacing:0.000px;transform:scaleX(0.9934);transform-origin:0 0;-webkit-text-stroke:0.25px #c8ccd8;">12</div>
<div class="t" style="left:615.88px;top:1533.70px;font-size:26.16px;line-height:26.16px;color:#c8ccd8;font-weight:400;letter-spacing:0.000px;transform:scaleX(0.9809);transform-origin:0 0;-webkit-text-stroke:0.25px #c8ccd8;">10</div>
<div class="t" style="left:629.99px;top:1612.87px;font-size:26.16px;line-height:26.16px;color:#c8ccd8;font-weight:400;letter-spacing:0.000px;-webkit-text-stroke:0.25px #c8ccd8;">8</div>
<div class="t" style="left:629.79px;top:1692.04px;font-size:26.16px;line-height:26.16px;color:#c8ccd8;font-weight:400;letter-spacing:0.000px;-webkit-text-stroke:0.25px #c8ccd8;">6</div>
<div class="t" style="left:630.51px;top:1771.21px;font-size:26.16px;line-height:26.16px;color:#c8ccd8;font-weight:400;letter-spacing:0.000px;-webkit-text-stroke:0.25px #c8ccd8;">4</div>
</body></html>
